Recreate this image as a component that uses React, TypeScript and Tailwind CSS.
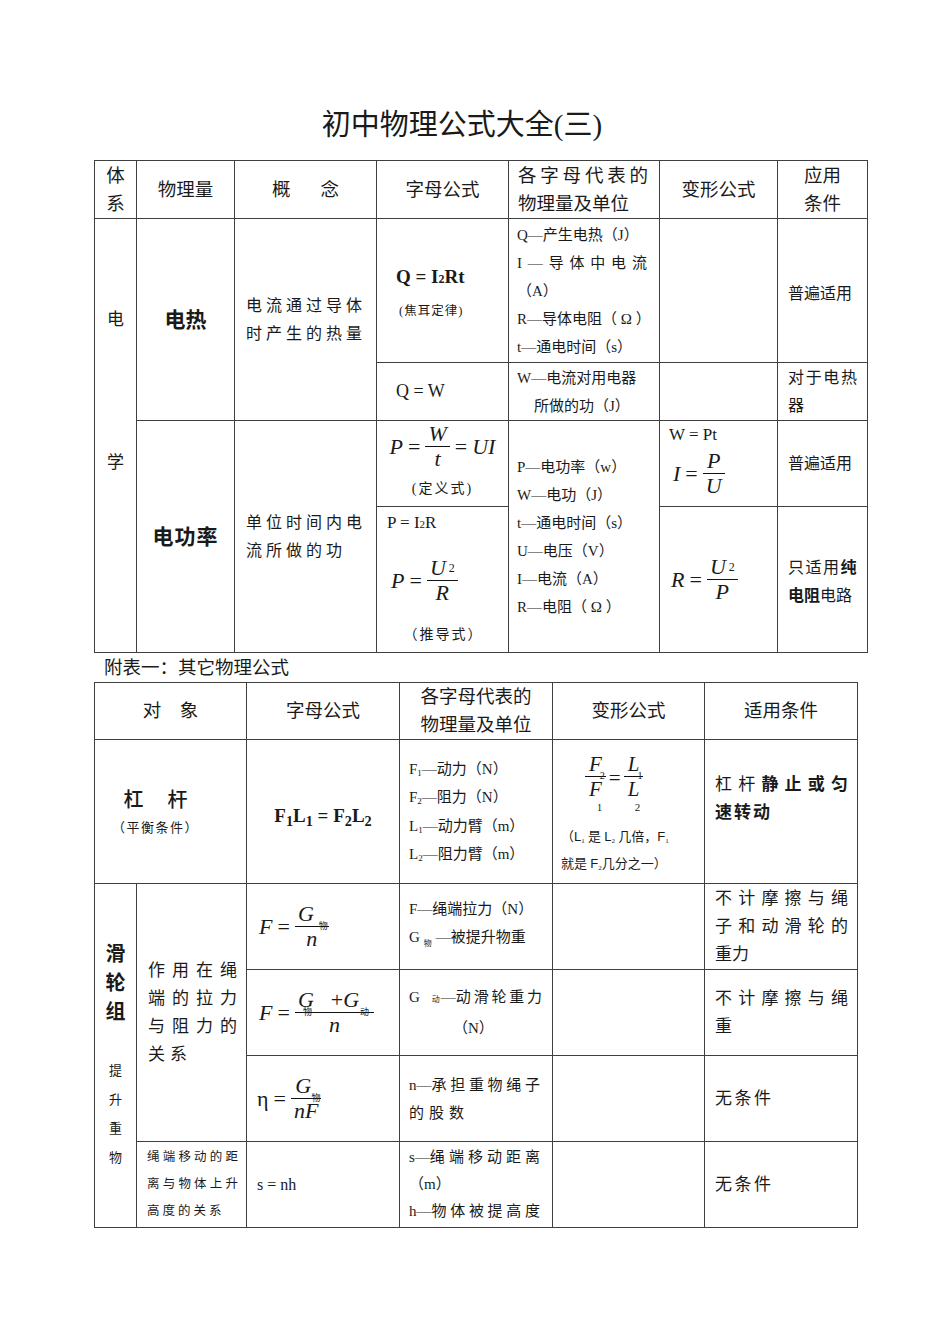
import type { ReactNode } from "react";

const serif = "font-[family-name:'Liberation_Serif','Noto_Sans_CJK_SC',serif]";
const sans = "font-[family-name:'Liberation_Sans','Noto_Sans_CJK_SC',sans-serif]";
const cell = "border-[1.5px] border-[#404040] p-0";

// stacked fraction; marks are the little subscripts that Word drew across the bar
const Frac = ({ num, den, marks }: { num: ReactNode; den: ReactNode; marks?: ReactNode }) => (
  <span className="inline-flex flex-col items-center">
    <span className="flex items-center px-[3px] leading-[24px]">{num}</span>
    <span className="relative block h-0 w-full border-t-[1.5px] border-[#111]">{marks}</span>
    <span className="flex items-center px-[3px] leading-[24px]">{den}</span>
  </span>
);

const Mark = ({ children, className = "" }: { children: ReactNode; className?: string }) => (
  <span className={`absolute top-[-7px] text-[9px] not-italic leading-[12px] ${className}`}>{children}</span>
);

const Eq = () => <span className="mx-[5px] not-italic">=</span>;

const LeverFrac = ({ a, m, s }: { a: string; m: string; s: string }) => (
  <span className="inline-flex flex-col items-center">
    <span className="px-[4px] leading-[24px]">{a}</span>
    <span className="relative block h-0 w-full border-t-[1.5px] border-[#111]">
      <span className="absolute right-[1px] top-[-7px] text-[10px] not-italic leading-[12px]">{m}</span>
    </span>
    <span className="px-[4px] leading-[24px]">{a}</span>
    <span className="ml-[8px] text-[11px] not-italic leading-[12px]">{s}</span>
  </span>
);

const Spread = ({ parts, className = "" }: { parts: ReactNode[]; className?: string }) => (
  <div className={`flex justify-between ${className}`}>
    {parts.map((p, i) => (
      <span key={i}>{p}</span>
    ))}
  </div>
);

const U2 = (
  <>
    U<span className="ml-[3px] text-[12px] not-italic leading-none">2</span>
  </>
);

const ElectricTable = () => (
  <table className="w-[773px] table-fixed border-collapse">
    <colgroup>
      <col className="w-[42px]" />
      <col className="w-[98px]" />
      <col className="w-[142px]" />
      <col className="w-[132px]" />
      <col className="w-[151px]" />
      <col className="w-[118px]" />
      <col className="w-[90px]" />
    </colgroup>
    <tbody>
      <tr className={`h-[58px] ${sans} text-[18.5px]`}>
        <td className={`${cell} text-center leading-[28px]`}>
          体<br />系
        </td>
        <td className={`${cell} text-center`}>物理量</td>
        <td className={`${cell} text-center`}>
          概<span className="inline-block w-[30px]" />念
        </td>
        <td className={`${cell} text-center`}>字母公式</td>
        <td className={`${cell} pl-[9px] pr-[11px] leading-[28px]`}>
          <Spread parts={[..."各字母代表的"]} />
          <div>物理量及单位</div>
        </td>
        <td className={`${cell} text-center`}>变形公式</td>
        <td className={`${cell} text-center leading-[28px]`}>
          应用<br />条件
        </td>
      </tr>

      <tr className="h-[144px]">
        <td rowSpan={4} className={`${cell} align-top text-center ${sans} text-[17px]`}>
          <div className="mt-[89px] leading-[24px]">电</div>
          <div className="mt-[119px] leading-[24px]">学</div>
        </td>
        <td rowSpan={2} className={`${cell} text-center ${sans} text-[21px] font-bold`}>
          电热
        </td>
        <td rowSpan={2} className={`${cell} pl-[11px] text-[16px] leading-[28px] tracking-[4px]`}>
          电流通过导体
          <br />
          时产生的热量
        </td>
        <td className={`${cell} align-top pl-[19px]`}>
          <div className="pt-[46px] text-[19px] font-bold leading-[24px]">
            Q = I<span className="text-[12px]">2</span>Rt
          </div>
          <div className="mt-[13px] pl-[3px] text-[12.5px] leading-[14px] tracking-[1px]">(焦耳定律)</div>
        </td>
        <td className={`${cell} pl-[8px] pr-[12px] pt-[1px] text-[15px] leading-[28px]`}>
          <div>Q—产生电热（J）</div>
          <Spread parts={["I", "—", ..."导体中电流"]} />
          <div>（A）</div>
          <div>R—导体电阻（ Ω ）</div>
          <div>t—通电时间（s）</div>
        </td>
        <td className={cell} />
        <td className={`${cell} pl-[10px] pt-[6px] text-[16px]`}>普遍适用</td>
      </tr>

      <tr className="h-[58px]">
        <td className={`${cell} pl-[19px] text-[18px]`}>Q = W</td>
        <td className={`${cell} pl-[8px] text-[15px] leading-[28px]`}>
          <div>W—电流对用电器</div>
          <div className="pl-[17px]">所做的功（J）</div>
        </td>
        <td className={cell} />
        <td className={`${cell} pl-[10px] pr-[10px] text-[16px] leading-[28px]`}>
          <Spread parts={[..."对于电热"]} />
          <div>器</div>
        </td>
      </tr>

      <tr className="h-[86px]">
        <td rowSpan={2} className={`${cell} text-center ${sans} text-[21px] font-bold tracking-[1px]`}>
          电功率
        </td>
        <td rowSpan={2} className={`${cell} pl-[11px] text-[16px] leading-[28px] tracking-[4px]`}>
          单位时间内电
          <br />
          流所做的功
        </td>
        <td className={`${cell} align-top`}>
          <div className="flex flex-col items-center pt-[1px]">
            <div className="flex items-center text-[22px] italic">
              P<Eq />
              <Frac num="W" den="t" />
              <Eq />
              UI
            </div>
            <div className="mt-[9px] text-[14px] leading-[18px] tracking-[2px]">(定义式)</div>
          </div>
        </td>
        <td rowSpan={2} className={`${cell} pl-[8px] text-[15px] leading-[28px]`}>
          <div>P—电功率（w）</div>
          <div>W—电功（J）</div>
          <div>t—通电时间（s）</div>
          <div>U—电压（V）</div>
          <div>I—电流（A）</div>
          <div>R—电阻（ Ω ）</div>
        </td>
        <td className={`${cell} align-top pl-[9px]`}>
          <div className="pt-[3px] text-[17px] leading-[22px]">W = Pt</div>
          <div className="mt-[3px] flex items-center pl-[4px] text-[22px] italic">
            I<Eq />
            <Frac num="P" den="U" />
          </div>
        </td>
        <td className={`${cell} pl-[10px] text-[16px]`}>普遍适用</td>
      </tr>

      <tr className="h-[146px]">
        <td className={`${cell} align-top pl-[10px]`}>
          <div className="pt-[5px] text-[17px] leading-[22px]">
            P = I<span className="text-[11px]">2</span>R
          </div>
          <div className="mt-[21px] flex items-center pl-[4px] text-[22px] italic">
            P<Eq />
            <Frac num={U2} den="R" />
          </div>
          <div className="mt-[21px] pr-[8px] text-center text-[14px] leading-[18px] tracking-[2px]">（推导式）</div>
        </td>
        <td className={`${cell} pl-[11px]`}>
          <div className="flex items-center text-[22px] italic">
            R<Eq />
            <Frac num={U2} den="P" />
          </div>
        </td>
        <td className={`${cell} pl-[10px] pt-[4px] text-[16px] leading-[28px]`}>
          <div className="tracking-[1.5px]">
            只适用<b>纯</b>
          </div>
          <div>
            <b>电阻</b>电路
          </div>
        </td>
      </tr>
    </tbody>
  </table>
);

const OtherTable = () => (
  <table className="w-[763px] table-fixed border-collapse">
    <colgroup>
      <col className="w-[42px]" />
      <col className="w-[110px]" />
      <col className="w-[153px]" />
      <col className="w-[153px]" />
      <col className="w-[152px]" />
      <col className="w-[153px]" />
    </colgroup>
    <tbody>
      <tr className={`h-[57px] ${sans} text-[18.5px]`}>
        <td colSpan={2} className={`${cell} text-center`}>
          对　象
        </td>
        <td className={`${cell} text-center`}>字母公式</td>
        <td className={`${cell} text-center leading-[28px]`}>
          各字母代表的
          <br />
          物理量及单位
        </td>
        <td className={`${cell} text-center`}>变形公式</td>
        <td className={`${cell} text-center`}>适用条件</td>
      </tr>

      <tr className="h-[144px]">
        <td colSpan={2} className={`${cell} pr-[30px] text-center`}>
          <div className={`${sans} text-[20px] font-medium leading-[26px]`}>
            杠<span className="inline-block w-[24px]" />杆
          </div>
          <div className="mt-[6px] text-[13px] leading-[18px] tracking-[1.5px]">（平衡条件）</div>
        </td>
        <td className={`${cell} pt-[10px] text-center text-[19px] font-bold`}>
          F<sub>1</sub>L<sub>1</sub> = F<sub>2</sub>L<sub>2</sub>
        </td>
        <td className={`${cell} pl-[9px] text-[15px] leading-[28.5px]`}>
          <div>
            F<sub className="text-[9px]">1</sub>—动力（N）
          </div>
          <div>
            F<sub className="text-[9px]">2</sub>—阻力（N）
          </div>
          <div>
            L<sub className="text-[9px]">1</sub>—动力臂（m）
          </div>
          <div>
            L<sub className="text-[9px]">2</sub>—阻力臂（m）
          </div>
        </td>
        <td className={`${cell} align-top`}>
          <div className="flex items-start pl-[32px] pt-[12px] text-[21px] italic">
            <LeverFrac a="F" m="2" s="1" />
            <span className="mx-[3px] mt-[14px] not-italic leading-[24px]">=</span>
            <LeverFrac a="L" m="1" s="2" />
          </div>
          <div className="mt-[10px] pl-[8px] text-[13px] leading-[27px]">
            <div>
              （<span className={sans}>L</span>
              <sub className="text-[7px]">1</sub> 是 <span className={sans}>L</span>
              <sub className="text-[7px]">2</sub> 几倍，<span className={sans}>F</span>
              <sub className="text-[7px]">1</sub>
            </div>
            <div>
              就是 <span className={sans}>F</span>
              <sub className="text-[7px]">2</sub>几分之一）
            </div>
          </div>
        </td>
        <td className={`${cell} align-top pl-[10px] pr-[9px] pt-[31px] text-[17px] leading-[28px]`}>
          <Spread parts={["杠", "杆", <b>静</b>, <b>止</b>, <b>或</b>, <b>匀</b>]} />
          <div className="font-bold tracking-[2px]">速转动</div>
        </td>
      </tr>

      <tr className="h-[86px]">
        <td rowSpan={4} className={`${cell} text-center`}>
          {[..."滑轮组"].map((c) => (
            <div key={c} className={`${sans} text-[20px] font-bold leading-[29px]`}>
              {c}
            </div>
          ))}
          <div className="h-[29px]" />
          {[..."提升重物"].map((c) => (
            <div key={c} className="text-[13px] leading-[29px]">
              {c}
            </div>
          ))}
        </td>
        <td rowSpan={3} className={`${cell} pl-[11px] pr-[9px] text-[17px] leading-[28px]`}>
          <Spread parts={[..."作用在绳"]} />
          <Spread parts={[..."端的拉力"]} />
          <Spread parts={[..."与阻力的"]} />
          <div className="tracking-[5px]">关系</div>
        </td>
        <td className={`${cell} pl-[12px]`}>
          <div className="flex items-center text-[22px] italic">
            F<Eq />
            <Frac
              num={<span className="pr-[12px]">G</span>}
              den="n"
              marks={<Mark className="right-[1px]">物</Mark>}
            />
          </div>
        </td>
        <td className={`${cell} pl-[9px] text-[15px] leading-[28px]`}>
          <div>F—绳端拉力（N）</div>
          <div>
            G<span className="mx-[4px] align-[-4px] text-[8px]">物</span>—被提升物重
          </div>
        </td>
        <td className={cell} />
        <td className={`${cell} pl-[10px] pr-[9px] text-[17px] leading-[28px]`}>
          <Spread parts={[..."不计摩擦与绳"]} />
          <Spread parts={[..."子和动滑轮的"]} />
          <div>重力</div>
        </td>
      </tr>

      <tr className="h-[86px]">
        <td className={`${cell} pl-[12px]`}>
          <div className="flex items-center text-[22px] italic">
            F<Eq />
            <Frac
              num={
                <>
                  G<span className="inline-block w-[17px]" />
                  <span className="not-italic">+</span>G<span className="inline-block w-[12px]" />
                </>
              }
              den="n"
              marks={
                <>
                  <Mark className="left-[8px]">物</Mark>
                  <Mark className="left-[65px]">动</Mark>
                </>
              }
            />
          </div>
        </td>
        <td className={`${cell} pl-[9px] pr-[10px] text-[15px] leading-[28px]`}>
          <div className="flex items-baseline">
            <span>G</span>
            <span className="ml-[12px] mr-[1px] text-[8px]">动</span>
            <Spread className="flex-1" parts={["—动", ..."滑轮重力"]} />
          </div>
          <div className="pl-[44px]">（N）</div>
        </td>
        <td className={cell} />
        <td className={`${cell} pl-[10px] pr-[9px] text-[17px] leading-[28px]`}>
          <Spread parts={[..."不计摩擦与绳"]} />
          <div>重</div>
        </td>
      </tr>

      <tr className="h-[86px]">
        <td className={`${cell} pl-[10px]`}>
          <div className="flex items-center text-[22px] italic">
            <span className="not-italic">η</span>
            <Eq />
            <Frac
              num={<span className="pr-[6px]">G</span>}
              den="nF"
              marks={<Mark className="right-[1px]">物</Mark>}
            />
          </div>
        </td>
        <td className={`${cell} pl-[9px] pr-[12px] text-[15px] leading-[28px]`}>
          <Spread parts={["n—承", ..."担重物绳子"]} />
          <div className="tracking-[5px]">的股数</div>
        </td>
        <td className={cell} />
        <td className={`${cell} pl-[10px] text-[17px] tracking-[2.5px]`}>无条件</td>
      </tr>

      <tr className="h-[86px]">
        <td className={`${cell} pl-[10px] pr-[8px] text-[12.5px] leading-[27px]`}>
          <Spread parts={[..."绳端移动的距"]} />
          <Spread parts={[..."离与物体上升"]} />
          <div className="tracking-[3px]">高度的关系</div>
        </td>
        <td className={`${cell} pl-[10px] text-[16px]`}>s = nh</td>
        <td className={`${cell} pl-[9px] pr-[12px] text-[15px] leading-[27px]`}>
          <Spread parts={["s—绳", ..."端移动距离"]} />
          <div>（m）</div>
          <Spread parts={["h—物", ..."体被提高度"]} />
        </td>
        <td className={cell} />
        <td className={`${cell} pl-[10px] text-[17px] tracking-[2.5px]`}>无条件</td>
      </tr>
    </tbody>
  </table>
);

const App = () => {
  return (
    <div className={`min-h-[1343px] w-[950px] bg-white pl-[94px] pt-[107px] text-[#1a1a1a] ${serif}`}>
      <h1 className="w-[773px] pr-[37px] text-center text-[29px] leading-[36px] font-normal">初中物理公式大全(三)</h1>
      <div className="mt-[17px]">
        <ElectricTable />
      </div>
      <div className={`h-[29px] pl-[10px] leading-[29px] ${sans} text-[18.5px]`}>附表一：其它物理公式</div>
      <OtherTable />
    </div>
  );
};

export default App;
